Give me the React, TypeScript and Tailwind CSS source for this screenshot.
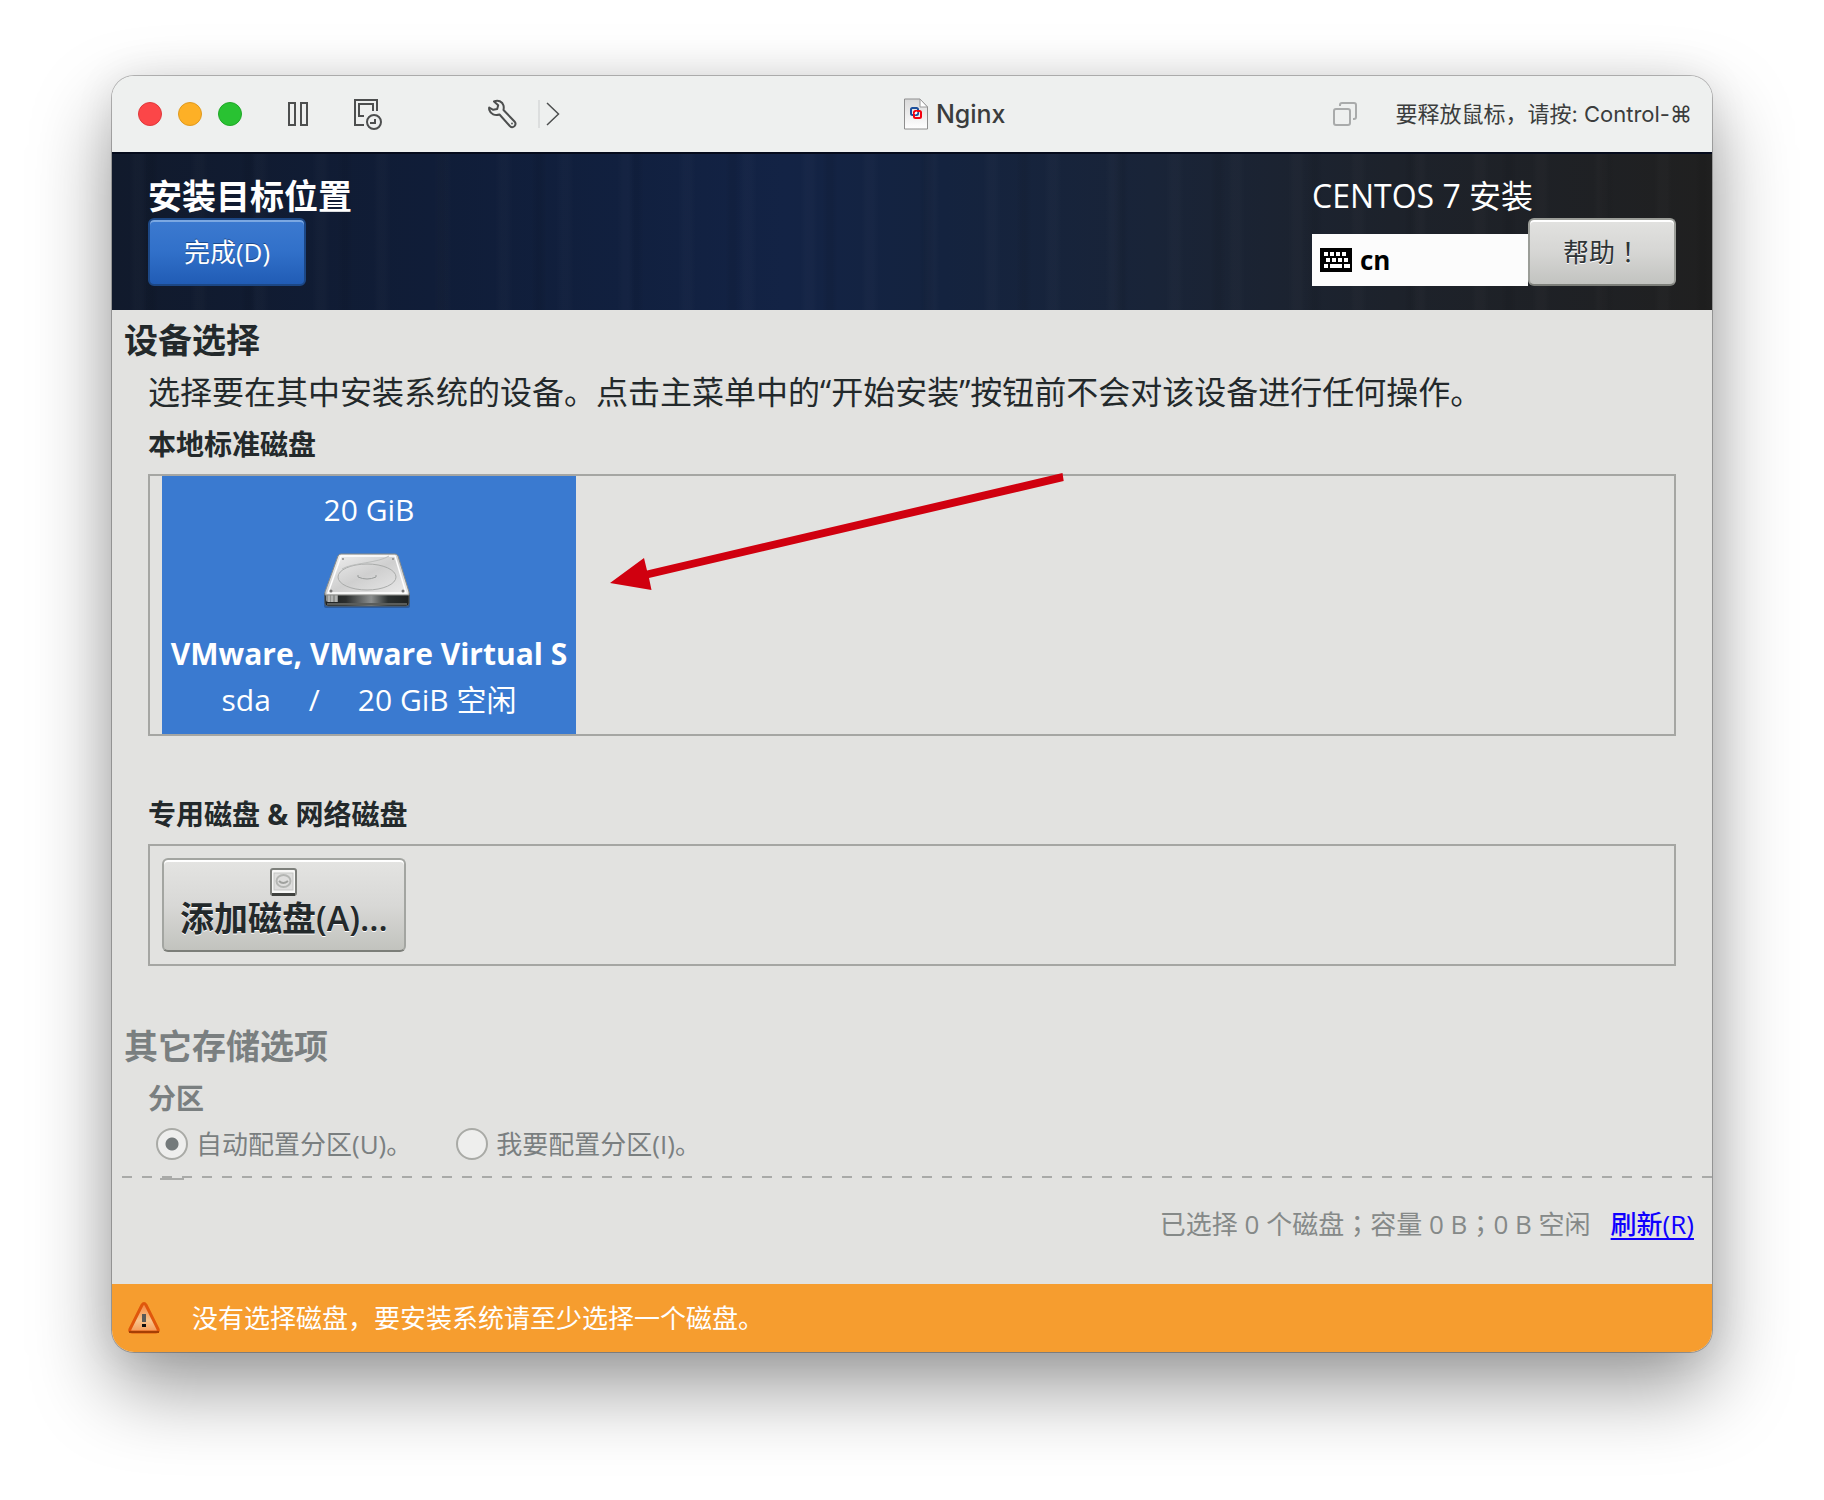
import { useState, type ReactNode } from 'react';

const GUEST_FONT = 'font-["Open_Sans","Noto_Sans_CJK_SC",sans-serif]';
const HOST_FONT = 'font-["Inter","Noto_Sans_CJK_SC",sans-serif]';
// full-width punctuation that sits in the middle of its cell
const MIDDLE_PUNCTUATION = 'font-["Noto_Sans_CJK_TC",sans-serif] leading-none';

const PARTITIONING = [
  { id: 'auto', label: '自动配置分区(U)。' },
  { id: 'manual', label: '我要配置分区(I)。' },
];

const TRAFFIC_LIGHTS = [
  { label: '关闭', tone: 'bg-[#fc4648] border-[#e0383b]' },
  { label: '最小化', tone: 'bg-[#fdb026] border-[#e09a1e]' },
  { label: '缩放', tone: 'bg-[#29c232] border-[#1fa827]' },
];

function SnapshotIcon() {
  return (
    <svg className="h-8 w-7" viewBox="0 0 28 32" fill="none" stroke="#4d4f4f" strokeWidth="2">
      <path d="M10 27H1V2h22v11" />
      <path d="M10 18H5V6h14v7" />
      <circle cx="20" cy="24" r="7" />
      <path d="M21 21v4h-5" />
    </svg>
  );
}

function WrenchIcon() {
  return (
    <svg className="h-[30px] w-[30px]" viewBox="1 0 30 30" fill="none" stroke="#4d4f4f" strokeWidth="2" strokeLinejoin="round">
      <path d="M7 2.500c4-2 8.500 0 9.500 4 .4 1.600.3 3 0 4.500l11 11.500c1.300 1.500 1.200 3.300 0 4.600-1.300 1.300-3.300 1.300-4.700-.1L12.500 15.500c-4.500 1.500-9-.5-10.200-4.600-.2-.8-.3-1.600-.1-2.400l4 2.300 4-.8 1-3.700z" />
      <circle cx="25" cy="24.500" r=".9" fill="#4d4f4f" stroke="none" />
    </svg>
  );
}

function DocumentIcon() {
  return (
    <svg className="h-8 w-6" viewBox="0 0 24 32" fill="none">
      <defs>
        <linearGradient id="paper" x1="0" y1="0" x2="0" y2="1">
          <stop offset="0" stopColor="#d9d9d9" />
          <stop offset="1" stopColor="#ffffff" />
        </linearGradient>
      </defs>
      <path d="M.5 1h15.500l7.500 8v22H.5z" fill="url(#paper)" stroke="#8e8e8e" />
      <path d="M16 1v8h7.500z" fill="#fff" stroke="#9a9a9a" />
      <rect x="7" y="10" width="7" height="7" rx="1.500" stroke="#1d4f9c" strokeWidth="2" />
      <rect x="10" y="13" width="7" height="7" rx="1.500" stroke="#f5000f" strokeWidth="2" />
      <path d="M11 16l2-2" stroke="#fff" strokeWidth="2" />
    </svg>
  );
}

function WindowsIcon() {
  return (
    <svg className="h-6 w-6" viewBox="0 0 24 24" fill="none" stroke="#a9abab" strokeWidth="2">
      <rect x="1" y="7" width="16" height="16" rx="2" />
      <path d="M7 4V3c0-1.100.9-2 2-2h12c1.100 0 2 .9 2 2v12c0 1.100-.9 2-2 2h-1" />
    </svg>
  );
}

function KeyboardIcon() {
  return (
    <svg className="h-6 w-8" viewBox="0 0 32 24">
      <path d="M0 0h32v24H0z" fill="#000" />
      <path
        d="M4 4h4v4H4zM10 4h4v4h-4zM16 4h4v4h-4zM22 4h4v4h-4zM6 10h4v4H6zM12 10h4v4h-4zM18 10h4v4h-4zM24 10h4v4h-4zM4 16h4v4H4zM10 16h12v4H10zM24 16h6v4h-6z"
        fill="#fff"
      />
    </svg>
  );
}

function DriveIcon() {
  return (
    <svg className="h-[60px] w-[92px]" viewBox="2 1 92 60" fill="none">
      <defs>
        <linearGradient id="drive-top" x1="0" y1="0" x2="1" y2="1">
          <stop offset="0" stopColor="#f2f2f2" />
          <stop offset=".5" stopColor="#cfcfcf" />
          <stop offset="1" stopColor="#ececec" />
        </linearGradient>
        <linearGradient id="drive-front" x1="0" y1="0" x2="1" y2="0">
          <stop offset="0" stopColor="#1c1f1f" />
          <stop offset=".25" stopColor="#2b2e2e" />
          <stop offset=".55" stopColor="#8c8f8f" />
          <stop offset=".75" stopColor="#2b3030" />
          <stop offset="1" stopColor="#1e2222" />
        </linearGradient>
      </defs>
      <path d="M3 43h86v12q0 2-3 2H6q-3 0-3-2z" fill="#1d3e6d" opacity=".5" />
      <path d="M4 42h84v10q0 3-3 3H7q-3 0-3-3z" fill="url(#drive-front)" stroke="#555856" />
      <path d="M5 44h12v7H7q-2 0-2-2z" fill="#8f918f" />
      <path d="M8 44v7M11 44v7M15 44v7" stroke="#d5d6d5" />
      <path d="M20 3h54q2 0 3 2l11 36v3H4v-3L17 5q1-2 3-2z" fill="url(#drive-top)" stroke="#8b8d89" />
      <path d="M20 5h54l11 37H7z" stroke="#fff" strokeWidth="1.500" />
      <ellipse cx="46" cy="26" rx="29" ry="13" stroke="#a9abaa" />
      <path d="M21 18C30 12 58 12 68 5" stroke="#bcbebd" />
      <path d="M37 24v2q9 4 18 0v-2" stroke="#999c9b" />
      <circle cx="10" cy="40" r="1.500" fill="#777" />
      <circle cx="82" cy="40" r="1.500" fill="#777" />
      <circle cx="22" cy="8" r="1" fill="#888" />
      <circle cx="72" cy="8" r="1" fill="#888" />
      <path d="M6 53h80" stroke="#5a5d5b" strokeWidth="2" />
    </svg>
  );
}

function SmallDriveIcon() {
  return (
    <svg className="h-7 w-7" viewBox="1 0 28 28" fill="none">
      <rect x="2" y="1" width="25" height="26" rx="2" fill="#f8f8f7" stroke="#7d7f7b" strokeWidth="2" />
      <path d="M3 26.500h23" stroke="#3f413e" strokeWidth="3" />
      <rect x="5" y="5" width="19" height="17" fill="#dededd" stroke="#c4c5c3" />
      <ellipse cx="14.500" cy="13" rx="7" ry="6" stroke="#b4b6b3" strokeWidth="2" />
      <path d="M10 13q4 4 9 0" stroke="#9fa19e" strokeWidth="2" />
    </svg>
  );
}

function WarningIcon() {
  return (
    <svg className="h-8 w-8" viewBox="0 0 32 32" fill="none">
      <defs>
        <linearGradient id="warning" x1="0" y1="0" x2="0" y2="1">
          <stop offset="0" stopColor="#f7843a" />
          <stop offset=".6" stopColor="#f8c48c" />
          <stop offset="1" stopColor="#f59a55" />
        </linearGradient>
      </defs>
      <path d="M14 3q2-3 4 0l12 24q1 3-2 3H4q-3 0-2-3z" fill="url(#warning)" stroke="#e0570c" strokeWidth="3" />
      <path d="M1 30h30" stroke="#a53f05" strokeWidth="2" />
      <path d="M14 12h4v8h-4z" fill="#5a5a58" />
      <path d="M14 22h4v3h-4z" fill="#111" />
    </svg>
  );
}

function TitleBar() {
  return (
    <div className={`flex h-[76px] items-center bg-[#eef0ef] pr-5 pl-[26px] text-[#3b3d3d] ${HOST_FONT}`}>
      <div className="flex items-center">
        <div className="flex gap-4">
          {TRAFFIC_LIGHTS.map((light) => (
            <button key={light.label} type="button" aria-label={light.label} className={`h-6 w-6 rounded-full border ${light.tone}`} />
          ))}
        </div>
        <button type="button" aria-label="暂停" className="ml-[46px]">
          <svg className="h-6 w-5" viewBox="0 0 20 24" fill="none" stroke="#4d4f4f" strokeWidth="2">
            <path d="M1 1h6v22H1zM13 1h6v22h-6z" />
          </svg>
        </button>
        <button type="button" aria-label="快照" className="ml-[46px]">
          <SnapshotIcon />
        </button>
        <button type="button" aria-label="设置" className="ml-[106px]">
          <WrenchIcon />
        </button>
        <span className="ml-5 h-7 w-0.5 bg-[#dcdede]" />
        <button type="button" aria-label="更多" className="mr-4 ml-1.5">
          <svg className="h-6 w-[14px]" viewBox="0 0 14 24" fill="none" stroke="#4d4f4f" strokeWidth="1.500">
            <path d="M1 1l11.500 11L1 23" />
          </svg>
        </button>
      </div>
      <div className="flex flex-1 items-center justify-center gap-2">
        <DocumentIcon />
        <h1 className="text-[25px] leading-8 font-medium">Nginx</h1>
      </div>
      <div className="flex items-center gap-[38px]">
        <WindowsIcon />
        <span className="text-[22px] leading-8 whitespace-nowrap">要释放鼠标，请按: Control-⌘</span>
      </div>
    </div>
  );
}

function Header() {
  return (
    <header className="flex justify-between border-t-2 border-[#050b1c] bg-[repeating-linear-gradient(90deg,transparent_0_31px,#00000010_37px_41px,transparent_47px_97px),repeating-linear-gradient(90deg,transparent_0_17px,#ffffff04_23px_29px,transparent_35px_61px),linear-gradient(90deg,#111a2c_0%,#101d38_20%,#11203f_32%,#132345_42%,#14233f_52%,#192438_65%,#1d222b_80%,#202020_100%)] px-9 pt-5 pb-6">
      <div>
        <h2 className="text-[34px] leading-[44px] font-bold text-white">安装目标位置</h2>
        <button
          type="button"
          className="h-[68px] w-[158px] rounded-md border-2 border-[#1c4785] bg-linear-to-b from-[#3c7ad0] via-[#3170c9] to-[#215cb5] text-[26px] text-white shadow-[inset_0_2px_0_#7ba8e2] text-shadow-[0_-1px_0_#1b4a8c]"
        >
          完成(D)
        </button>
      </div>
      <div>
        <p className="text-[32px] leading-[44px] text-white">CENTOS 7 安装</p>
        <div className="flex items-end">
          <button type="button" className="flex h-[52px] w-[216px] items-center gap-2 bg-[#fcfcfc] px-2 text-[26px] font-bold text-black">
            <KeyboardIcon />
            cn
          </button>
          <button
            type="button"
            className="h-[68px] w-[148px] rounded-md border-2 border-[#9b9d98] border-b-[#7c7e79] bg-linear-to-b from-[#e2e2e0] via-[#d6d6d4] to-[#c2c3c0] text-[26px] text-[#2e3436] shadow-[inset_0_2px_0_#fff] text-shadow-[0_1px_0_#fff]"
          >
            帮助<span className={MIDDLE_PUNCTUATION}>！</span>
          </button>
        </div>
      </div>
    </header>
  );
}

function DiskTile() {
  return (
    <button type="button" aria-pressed="true" className="flex h-[258px] w-[414px] flex-col items-center bg-[#3a7ad0] pt-3 text-[30px] leading-[44px] text-white">
      <span>20 GiB</span>
      <span className="my-5">
        <DriveIcon />
      </span>
      <span className="font-bold whitespace-nowrap">VMware, VMware Virtual S</span>
      <span className="mt-0.5 flex gap-[38px]">
        <span>sda</span>
        <span>/</span>
        <span>20 GiB 空闲</span>
      </span>
    </button>
  );
}

function Panel({ title, className, children }: { title: string; className: string; children: ReactNode }) {
  return (
    <section className={`mx-9 ${className}`}>
      <h4 className="text-[28px] leading-[60px] font-bold">{title}</h4>
      {children}
    </section>
  );
}

export default function App() {
  const [partitioning, setPartitioning] = useState('auto');

  return (
    <div className={`min-h-screen bg-white px-28 pt-[76px] pb-[148px] text-[#23292b] ${GUEST_FONT}`}>
      <main className="overflow-hidden rounded-[22px] shadow-[0_0_0_1px_#00000040,0_36px_80px_#00000066,0_0_40px_#00000014]">
        <TitleBar />
        <Header />

        <div className="relative bg-[#e2e2e0] pb-0.5">
          <h3 className="px-3 text-[34px] leading-[60px] font-bold">设备选择</h3>
          <p className="px-9 text-[32px] leading-[44px]">选择要在其中安装系统的设备。点击主菜单中的“开始安装”按钮前不会对该设备进行任何操作。</p>

          <Panel title="本地标准磁盘" className="">
            <div className="relative border-2 border-[#a5a6a3] pl-3">
              <DiskTile />
              <svg className="absolute -top-1 left-[460px] h-[120px] w-[456px]" viewBox="0 0 456 120" fill="#d0000f">
                <path d="M452.500 1l1.200 8L39 106l2.500 12L0 111l34-25 3 12.500z" />
              </svg>
            </div>
          </Panel>

          <Panel title="专用磁盘 & 网络磁盘" className="mt-12">
            <div className="border-2 border-[#a5a6a3] p-3">
              <button
                type="button"
                className="flex h-[94px] w-[244px] flex-col items-center rounded-md border-2 border-[#a3a5a1] border-b-[#7c7e79] bg-linear-to-b from-[#e4e4e2] via-[#d8d8d6] to-[#c2c3be] pt-2 text-[34px] leading-[44px] font-semibold shadow-[inset_0_2px_0_#fff] text-shadow-[0_1px_0_#fff]"
              >
                <SmallDriveIcon />
                添加磁盘(A)…
              </button>
            </div>
          </Panel>

          <section className="mt-[50px] text-[#7a7f80]">
            <h3 className="px-3 text-[34px] leading-[60px] font-bold">其它存储选项</h3>
            <fieldset className="px-9 text-[26px]">
              <legend className="text-[28px] leading-[44px] font-semibold">分区</legend>
              <div className="flex gap-11 px-2">
                {PARTITIONING.map((option) => (
                  <label key={option.id} className="flex h-12 items-center gap-2">
                    <input
                      type="radio"
                      name="partitioning"
                      value={option.id}
                      checked={partitioning === option.id}
                      onChange={() => setPartitioning(option.id)}
                      className="h-8 w-8 appearance-none rounded-full border-2 border-[#a9aaa6] bg-[#eeeeed] checked:bg-[radial-gradient(circle,#747a7b_6px,#eeeeed_7px)]"
                    />
                    {option.label}
                  </label>
                ))}
              </div>
            </fieldset>
          </section>

          <div className="mt-2 ml-2.5 h-0.5 bg-[repeating-linear-gradient(90deg,#a9aaa8_0_10px,transparent_10px_20px)]" />
          <span className="absolute bottom-0 left-12 h-0.5 w-6 bg-[#a9aaa8]" />
        </div>

        <div className="flex h-[104px] items-start justify-end gap-5 bg-[#e2e2e0] px-[18px] pt-5 text-[26px] leading-[48px] text-[#858988]">
          <span>
            已选择 0 个磁盘<span className={MIDDLE_PUNCTUATION}>；</span>容量 0 B<span className={MIDDLE_PUNCTUATION}>；</span>0 B 空闲
          </span>
          <a href="#refresh" className="font-medium text-[#0f00ff] underline decoration-2 underline-offset-4">
            刷新(R)
          </a>
        </div>

        <div className="flex h-[68px] items-center gap-8 bg-[#f69d2f] px-4 text-[26px] text-white" role="alert">
          <WarningIcon />
          没有选择磁盘，要安装系统请至少选择一个磁盘。
        </div>
      </main>
    </div>
  );
}
